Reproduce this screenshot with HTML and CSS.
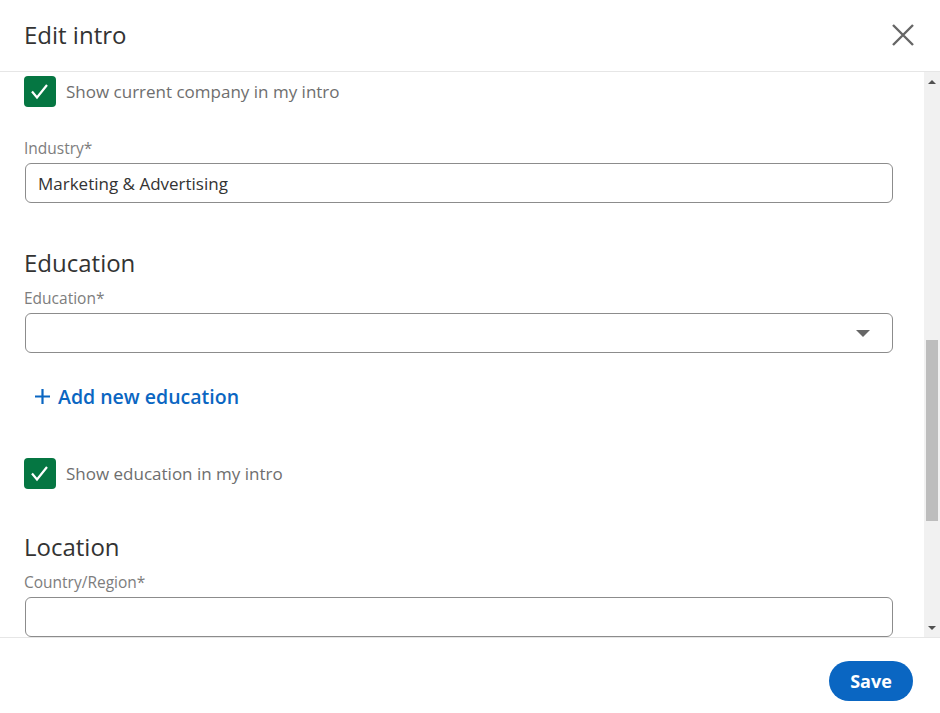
FILE: index.html
```html
<!DOCTYPE html>
<html lang="en">
<head>
<meta charset="UTF-8" />
<title>Edit intro</title>
<link rel="stylesheet" href="styles.css">
</head>
<body>
<div class="modal" role="dialog" aria-label="Edit intro">
  <header class="modal-header">
    <h2>Edit intro</h2>
    <button class="close" aria-label="Dismiss">
      <svg width="24" height="24" viewBox="0 0 24 24"><path d="M2 2 L22 22 M22 2 L2 22" stroke="#666" stroke-width="2.4" fill="none"/></svg>
    </button>
  </header>

  <div class="modal-body">
    <div class="content">
      <label class="check-row">
        <span class="check"><svg width="32" height="31" viewBox="0 0 32 31"><path d="M8 15.5 L13 21.5 L23 9" stroke="#fff" stroke-width="2.2" fill="none"/></svg></span>
        <span>Show current company in my intro</span>
      </label>

      <div class="field field-industry">
        <div class="label">Industry*</div>
        <div class="input">Marketing &amp; Advertising</div>
      </div>

      <h3 class="section-title">Education</h3>
      <div class="field">
        <div class="label">Education*</div>
        <div class="input select">
          <svg width="16" height="9" viewBox="0 0 16 9"><path d="M1 1 H15 L8 8 Z" fill="#666"/></svg>
        </div>
      </div>

      <a class="add-link" href="#">
        <svg width="15" height="15" viewBox="0 0 15 15"><path d="M7.5 0 V15 M0 7.5 H15" stroke="#0a66c2" stroke-width="2.2"/></svg>
        <span>Add new education</span>
      </a>

      <label class="check-row check-edu">
        <span class="check"><svg width="32" height="31" viewBox="0 0 32 31"><path d="M8 15.5 L13 21.5 L23 9" stroke="#fff" stroke-width="2.2" fill="none"/></svg></span>
        <span>Show education in my intro</span>
      </label>

      <h3 class="section-title location">Location</h3>
      <div class="field">
        <div class="label">Country/Region*</div>
        <div class="input"></div>
      </div>
    </div>

    <div class="scrollbar">
      <span class="arrow up"></span>
      <div class="track-top"></div>
      <div class="thumb"></div>
      <div class="track-bottom"></div>
      <span class="arrow down"></span>
    </div>
  </div>

  <footer class="modal-footer">
    <button class="save">Save</button>
  </footer>
</div>
</body>
</html>
```

FILE: styles.css
```css
* {
  box-sizing: border-box;
}
body {
  margin: 0;
  background: #fff;
  font-family: "Open Sans", "Noto Sans", sans-serif;
  color: #333;
}
.modal {
  width: 940px;
  height: 713px;
  display: flex;
  flex-direction: column;
  overflow: hidden;
}
.modal-header {
  height: 72px;
  flex-shrink: 0;
  display: flex;
  align-items: center;
  justify-content: space-between;
  padding: 0 25px 2px 24px;
  border-bottom: 1px solid #e6e6e6;
}
.modal-header h2 {
  margin: 0;
  font-size: 24px;
  font-weight: 400;
  color: #333;
}
.close {
  background: none;
  border: none;
  padding: 0;
  width: 24px;
  height: 24px;
  cursor: pointer;
}
.modal-body {
  flex: 1;
  display: flex;
  min-height: 0;
  border-bottom: 1px solid #e6e6e6;
}
.content {
  flex: 1;
  padding: 4px 31px 0 24px;
  overflow: hidden;
}
.check-row {
  display: flex;
  align-items: center;
  gap: 10px;
  height: 31px;
  font-size: 17px;
  color: #6e6e6e;
}
.check {
  width: 32px;
  height: 31px;
  border-radius: 4px;
  background: #057642;
  display: flex;
}
.field-industry {
  margin-top: 31px;
}
.label {
  font-size: 15.5px;
  line-height: 20px;
  color: #7d7d7d;
  margin-bottom: 5px;
}
.input {
  height: 40px;
  margin-left: 1px;
  border: 1px solid #8c8c8c;
  border-radius: 6px;
  padding: 0 12px;
  display: flex;
  align-items: center;
  font-size: 17px;
  color: #333;
}
.select {
  justify-content: flex-end;
  padding-right: 21px;
}
.section-title {
  margin: 45px 0 10px;
  font-size: 24px;
  font-weight: 400;
  line-height: 30px;
  color: #333;
}
.location {
  margin-top: 43px;
}
.add-link {
  display: flex;
  align-items: center;
  gap: 8px;
  margin: 31px 0 0 11px;
  height: 24px;
  font-size: 19.5px;
  font-weight: 600;
  color: #0a66c2;
  text-decoration: none;
}
.check-edu {
  margin-top: 50px;
}
.scrollbar {
  width: 16px;
  flex-shrink: 0;
  background: #f1f1f1;
  display: flex;
  flex-direction: column;
  align-items: center;
}
.arrow {
  width: 0;
  height: 0;
  border-left: 4px solid transparent;
  border-right: 4px solid transparent;
}
.arrow.up {
  margin-top: 8px;
  border-bottom: 4px solid #505050;
}
.arrow.down {
  margin-bottom: 7px;
  border-top: 4px solid #505050;
}
.track-top {
  height: 256px;
}
.thumb {
  width: 12px;
  height: 181px;
  background: #bdbdbd;
}
.track-bottom {
  flex: 1;
}
.modal-footer {
  height: 75px;
  flex-shrink: 0;
  display: flex;
  justify-content: flex-end;
  align-items: flex-start;
  padding: 23px 27px 0 0;
}
.save {
  width: 84px;
  height: 40px;
  border: none;
  border-radius: 20px;
  background: #0a66c2;
  color: #fff;
  font-family: inherit;
  font-size: 18px;
  font-weight: 700;
  cursor: pointer;
}
```
